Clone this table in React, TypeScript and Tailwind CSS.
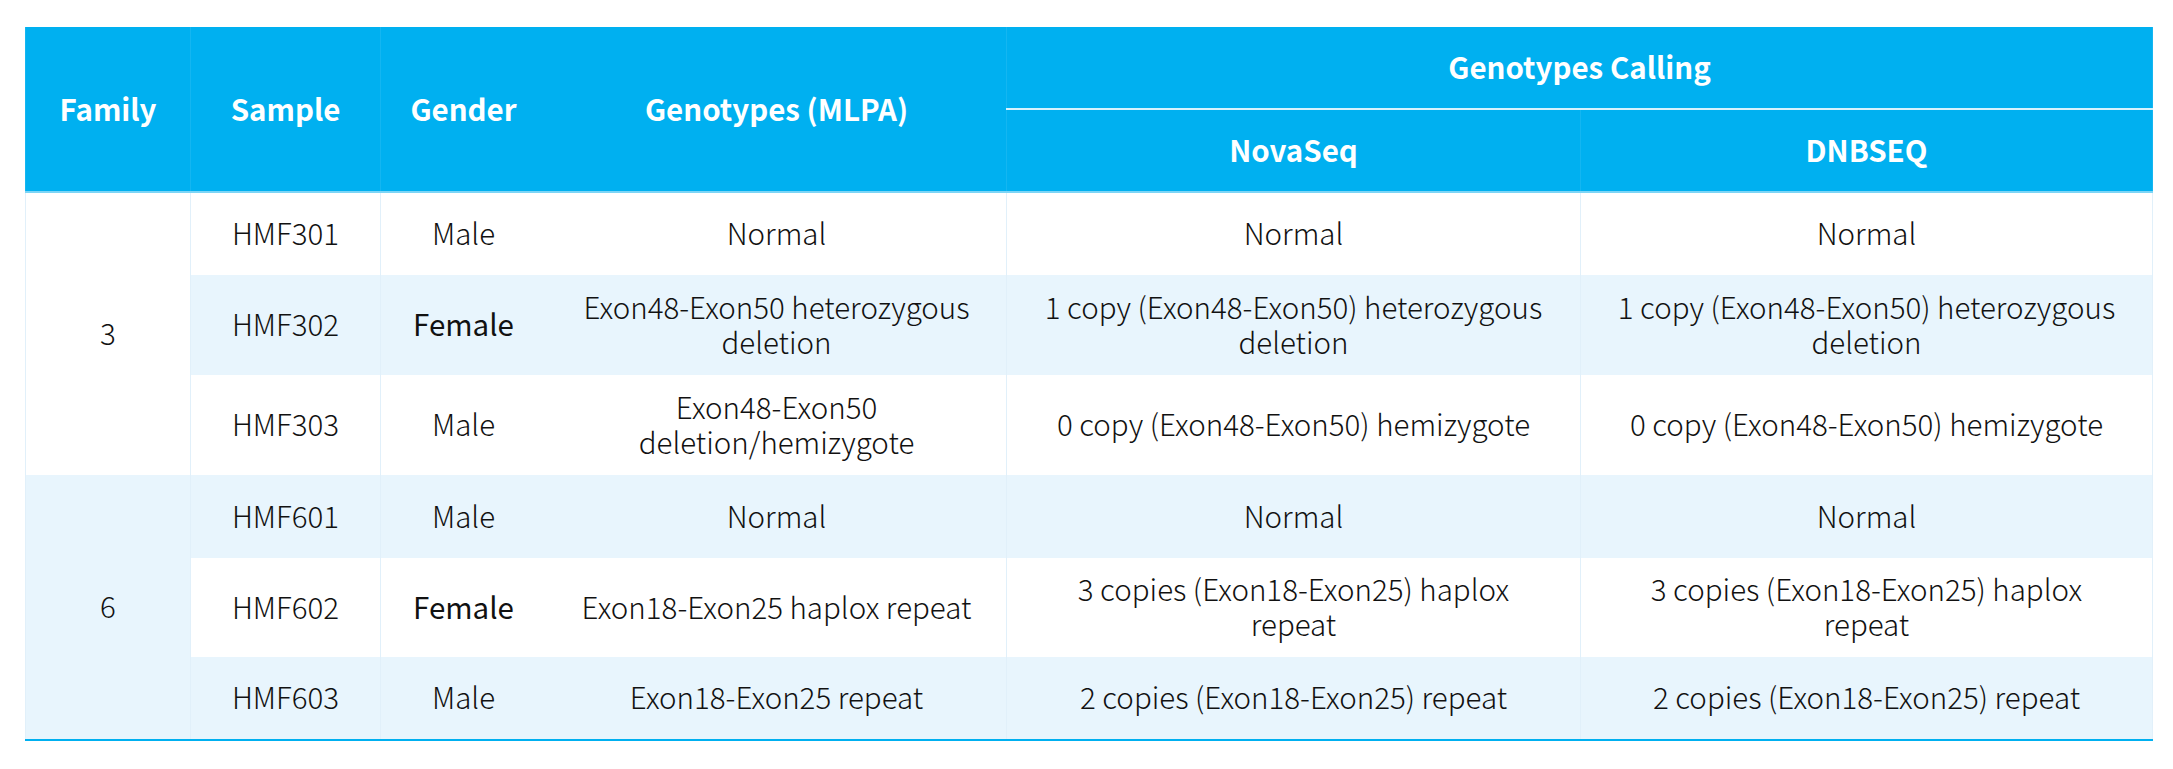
const rows = [
  { family: '3', span: 3, sample: 'HMF301', gender: 'Male', mlpa: 'Normal', nova: 'Normal', dnb: 'Normal', h: 'h-[83px]' },
  {
    sample: 'HMF302',
    gender: 'Female',
    mlpa: 'Exon48-Exon50 heterozygous deletion',
    nova: '1 copy (Exon48-Exon50) heterozygous deletion',
    dnb: '1 copy (Exon48-Exon50) heterozygous deletion',
    h: 'h-[100px]',
  },
  {
    sample: 'HMF303',
    gender: 'Male',
    mlpa: 'Exon48-Exon50 deletion/hemizygote',
    nova: '0 copy (Exon48-Exon50) hemizygote',
    dnb: '0 copy (Exon48-Exon50) hemizygote',
    h: 'h-[100px]',
  },
  { family: '6', span: 3, sample: 'HMF601', gender: 'Male', mlpa: 'Normal', nova: 'Normal', dnb: 'Normal', h: 'h-[83px]' },
  {
    sample: 'HMF602',
    gender: 'Female',
    mlpa: 'Exon18-Exon25 haplox repeat',
    nova: '3 copies (Exon18-Exon25) haplox repeat',
    dnb: '3 copies (Exon18-Exon25) haplox repeat',
    h: 'h-[99px]',
  },
  {
    sample: 'HMF603',
    gender: 'Male',
    mlpa: 'Exon18-Exon25 repeat',
    nova: '2 copies (Exon18-Exon25) repeat',
    dnb: '2 copies (Exon18-Exon25) repeat',
    h: 'h-[83px]',
  },
]

const th = 'border-x border-[#14b6f1] px-4 pb-[2px] text-center font-bold text-white'
const td = 'border-x border-[#e1f0fa] px-8 pb-[3px] text-center align-middle'

export default function App() {
  return (
    <div className="min-h-screen bg-white pt-[27px] pl-[25px] font-['Noto_Sans_CJK_SC',sans-serif] text-[29.5px] leading-[35px] text-[#111]">
      <table className="w-[2127px] table-fixed border-collapse">
        <colgroup>
          <col className="w-[165px]" />
          <col className="w-[190px]" />
          <col className="w-[166px]" />
          <col className="w-[460px]" />
          <col className="w-[574px]" />
          <col className="w-[572px]" />
        </colgroup>
        <thead className="bg-[#00b0f0]">
          <tr className="h-[82px]">
            <th rowSpan={2} className={`${th} border-b-2 border-b-[#7dd5f6]`}>Family</th>
            <th rowSpan={2} className={`${th} border-b-2 border-b-[#7dd5f6]`}>Sample</th>
            <th rowSpan={2} className={`${th} border-r-[#00b0f0] border-b-2 border-b-[#7dd5f6]`}>Gender</th>
            <th rowSpan={2} className={`${th} border-l-[#00b0f0] border-b-2 border-b-[#7dd5f6]`}>Genotypes (MLPA)</th>
            <th colSpan={2} className={`${th} border-b-2 border-b-[#d6f2fd]`}>
              Genotypes Calling
            </th>
          </tr>
          <tr className="h-[83px]">
            <th className={`${th} border-b-2 border-b-[#7dd5f6]`}>NovaSeq</th>
            <th className={`${th} border-b-2 border-b-[#7dd5f6]`}>DNBSEQ</th>
          </tr>
        </thead>
        <tbody className="border-b-2 border-[#00b0f0] font-light">
          {rows.map((r, i) => {
            const bg = i % 2 === 1 ? 'bg-[#e8f5fd]' : 'bg-white'
            const line = i % 2 === 1 ? 'border-r-[#e8f5fd]' : 'border-r-white'
            return (
              <tr key={r.sample} className={`${r.h} ${bg}`}>
                {r.family && (
                  <td rowSpan={r.span} className={`${td} px-2`}>
                    {r.family}
                  </td>
                )}
                <td className={`${td} px-2`}>{r.sample}</td>
                <td className={`${td} px-2 ${line} ${r.gender === 'Female' ? 'font-normal' : ''}`}>{r.gender}</td>
                <td className={`${td} px-6`}>{r.mlpa}</td>
                <td className={td}>{r.nova}</td>
                <td className={td}>{r.dnb}</td>
              </tr>
            )
          })}
        </tbody>
      </table>
    </div>
  )
}
